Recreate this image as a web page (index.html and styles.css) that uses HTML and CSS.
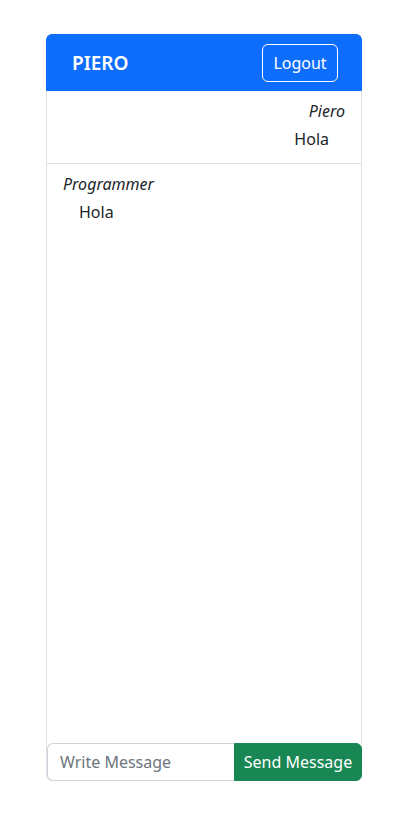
FILE: index.html
```html
<!DOCTYPE html>
<html lang="es">
<head>
  <meta charset="UTF-8">
  <meta name="viewport" content="width=device-width, initial-scale=1.0">
  <title>Chat</title>
  <link rel="stylesheet" href="styles.css">
</head>
<body>
  <div class="chat-card">
    <header class="chat-header">
      <h1>PIERO</h1>
      <button class="btn-logout">Logout</button>
    </header>

    <div class="chat-body">
      <div class="message mine">
        <p class="author">Piero</p>
        <p class="text">Hola</p>
      </div>
      <div class="message other">
        <p class="author">Programmer</p>
        <p class="text">Hola</p>
      </div>
    </div>

    <form class="chat-form">
      <input type="text" placeholder="Write Message">
      <button type="button" class="btn-send">Send Message</button>
    </form>
  </div>
</body>
</html>
```

FILE: styles.css
```css
/* Reset */
* {
  margin: 0;
  padding: 0;
  box-sizing: border-box;
}

body {
  font-family: "Noto Sans", "Open Sans", sans-serif;
  font-size: 16px;
  color: #212529;
  background-color: #fff;
  padding: 34px 47px 0 46px;
}

/* Card */
.chat-card {
  width: 316px;
  height: 747px;
  border: 1px solid #dee2e6;
  border-radius: 6px;
  display: flex;
  flex-direction: column;
}

/* Header */
.chat-header {
  background-color: #0d6efd;
  color: #fff;
  height: 57px;
  margin: -1px -1px 0 -1px;
  border-radius: 6px 6px 0 0;
  display: flex;
  align-items: center;
  justify-content: space-between;
  padding: 0 24px 0 26px;
}

.chat-header h1 {
  font-size: 19px;
  font-weight: 600;
}

.btn-logout {
  font-family: inherit;
  font-size: 16px;
  color: #fff;
  background: transparent;
  border: 1px solid #fff;
  border-radius: 6px;
  width: 76px;
  height: 38px;
  margin-top: 1px;
}

/* Messages */
.chat-body {
  flex-grow: 1;
}

.message {
  padding: 8px 16px 12px;
  border-bottom: 1px solid #dee2e6;
}

.message .author {
  font-style: italic;
  line-height: 24px;
  margin-bottom: 4px;
}

.message .text {
  line-height: 24px;
}

.message.mine {
  text-align: right;
}

.message.mine .text {
  padding-right: 16px;
}

.message.other {
  border-bottom: none;
}

.message.other .text {
  padding-left: 16px;
}

/* Form */
.chat-form {
  display: flex;
  height: 38px;
  margin: 0 -1px -1px 0;
}

.chat-form input {
  flex: 1 1 auto;
  min-width: 0;
  width: 0;
  font-family: inherit;
  font-size: 16px;
  padding: 0 12px;
  border: 1px solid #ced4da;
  border-right: none;
  border-radius: 6px 0 0 6px;
  outline: none;
  color: #212529;
}

.chat-form input::placeholder {
  color: #6c757d;
}

.btn-send {
  flex: 0 0 128px;
  white-space: nowrap;
  font-family: inherit;
  font-size: 16px;
  color: #fff;
  background-color: #198754;
  border: 1px solid #198754;
  border-radius: 0 6px 6px 0;
}
```
